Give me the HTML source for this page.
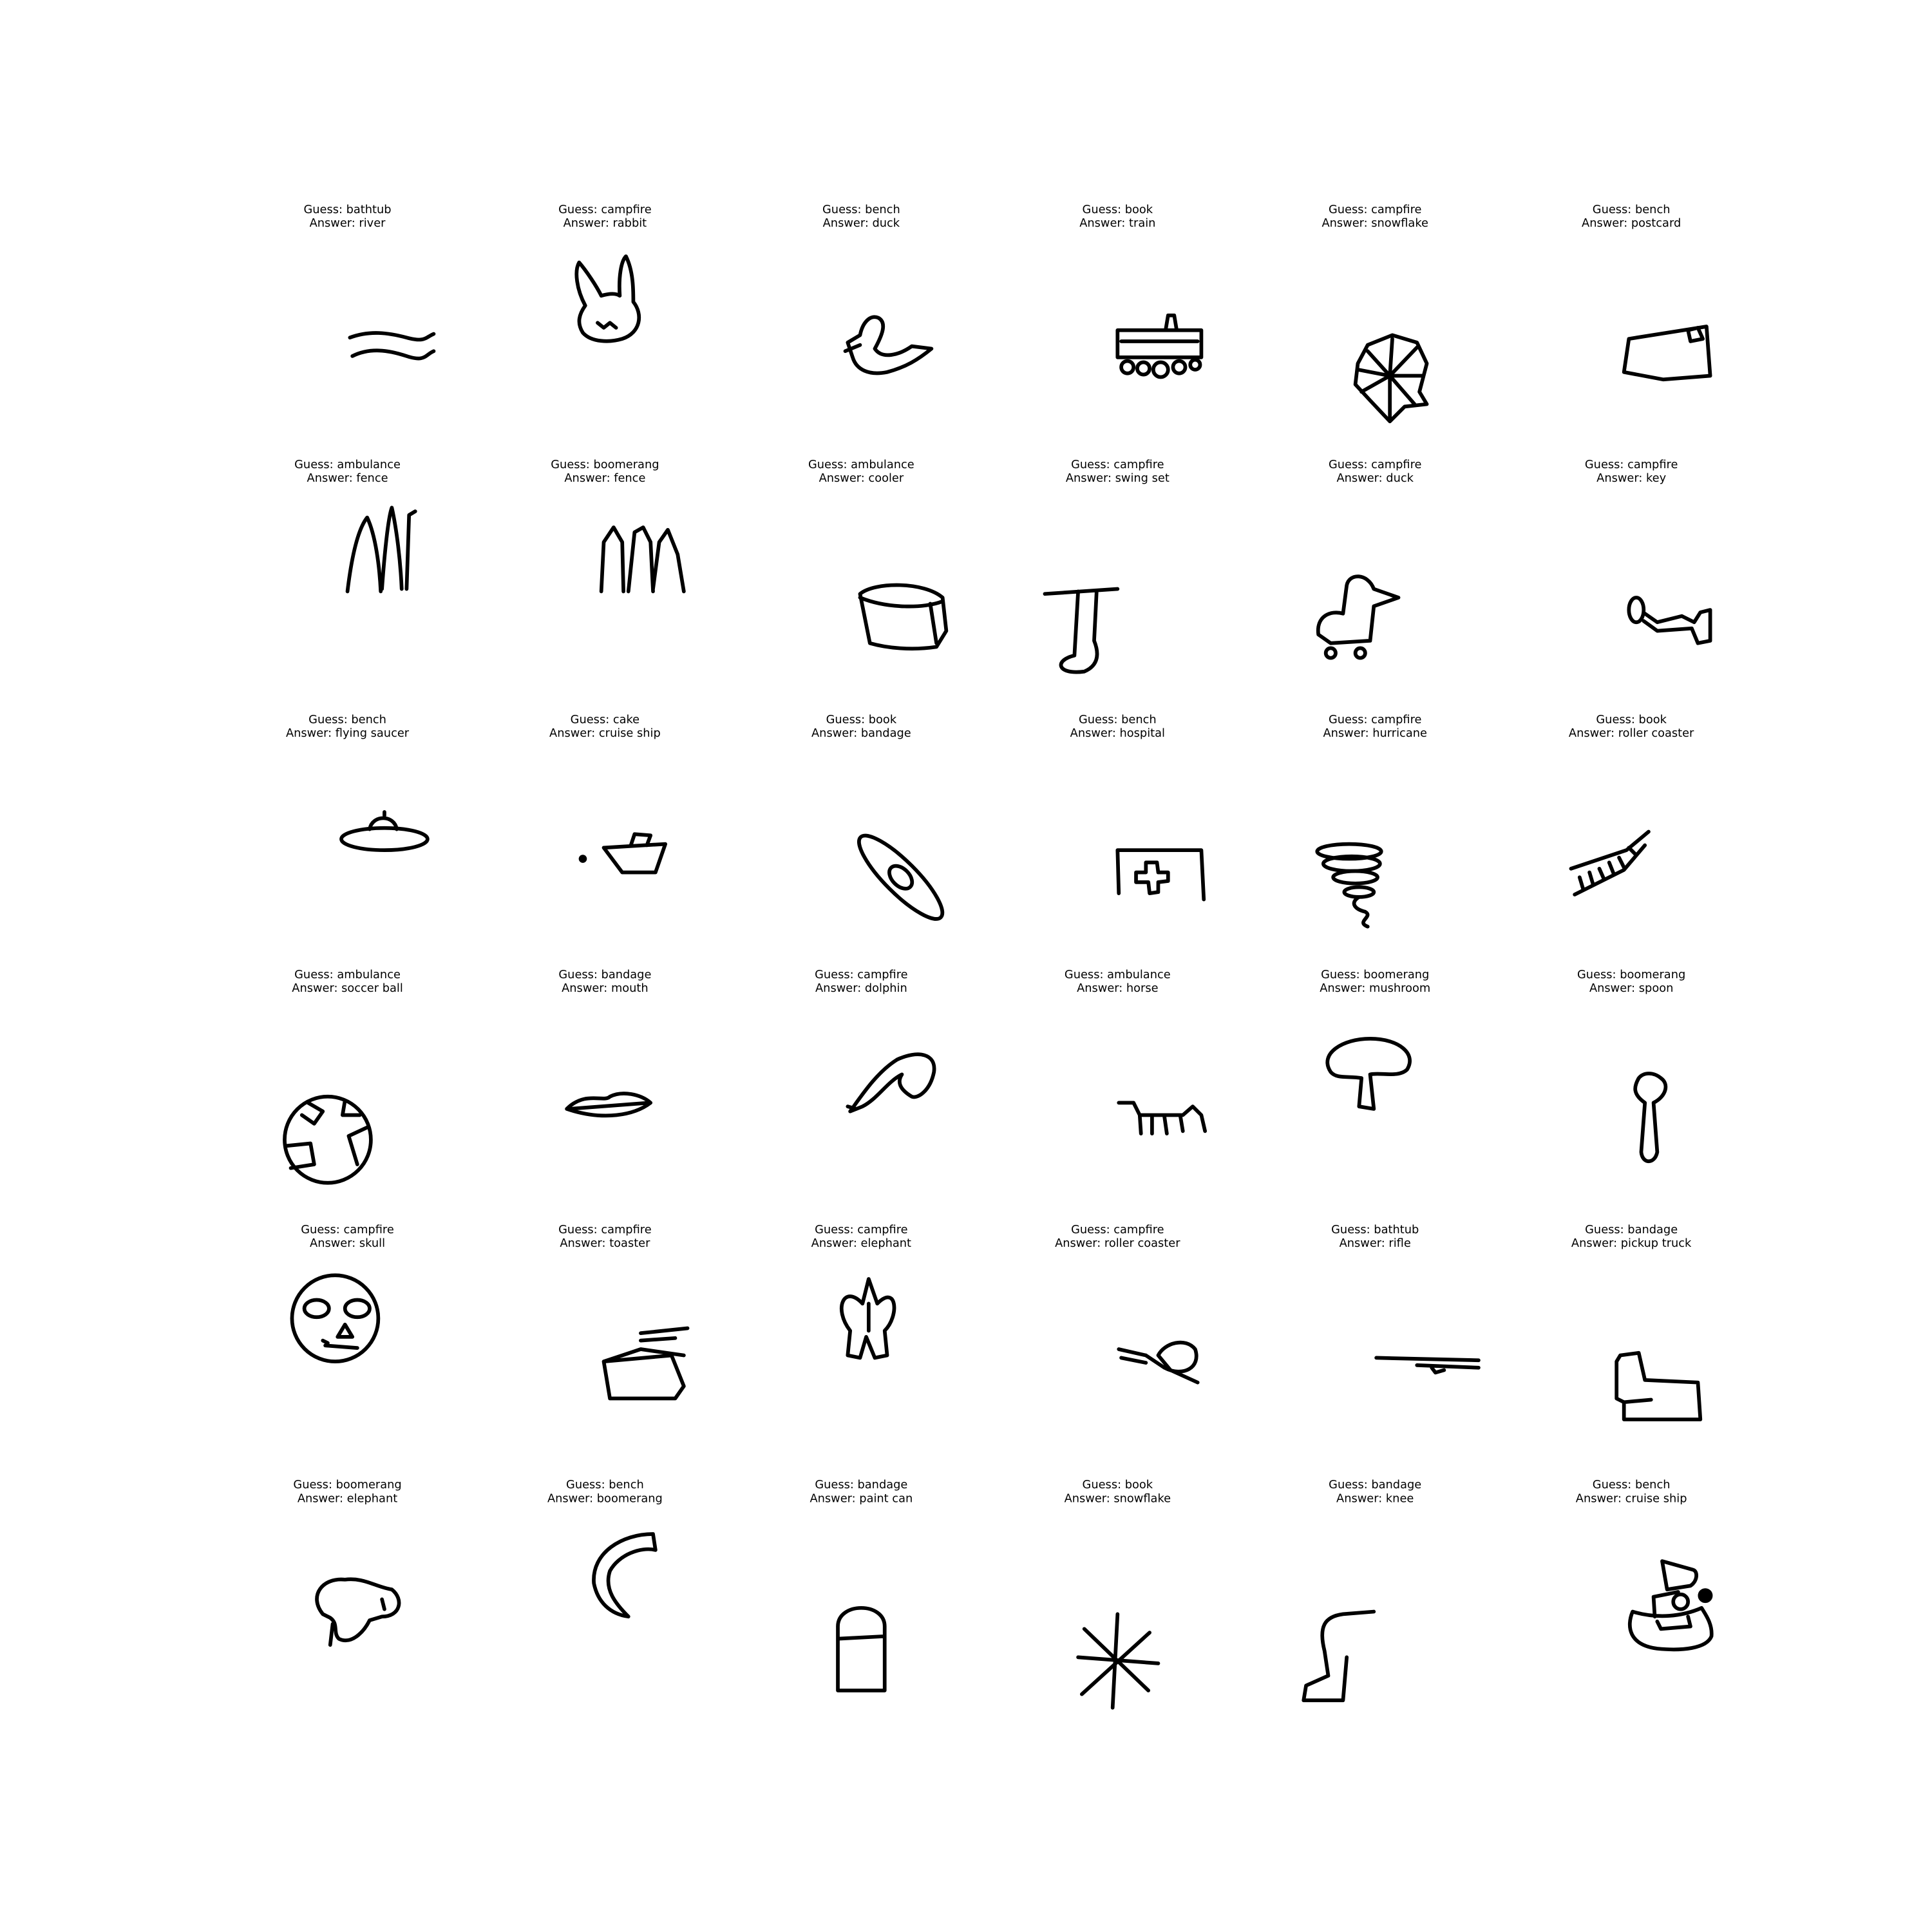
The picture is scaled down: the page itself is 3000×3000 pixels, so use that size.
<!DOCTYPE html>
<html><head><meta charset="utf-8"><style>
html,body{margin:0;padding:0;background:#fff;}
svg{display:block}
text{font-family:"DejaVu Sans","Liberation Sans",sans-serif;font-size:9.3px;fill:#000;text-anchor:middle}
.d{fill:none;stroke:#000;stroke-width:3;stroke-linecap:round;stroke-linejoin:round}
</style></head><body>
<svg width="3000" height="3000" viewBox="0 0 1568 1568" xmlns="http://www.w3.org/2000/svg">
<rect width="1568" height="1568" fill="#fff"/>
<g>
<text x="282" y="173">Guess: bathtub</text><text x="282" y="184">Answer: river</text>
<text x="491" y="173">Guess: campfire</text><text x="491" y="184">Answer: rabbit</text>
<text x="699" y="173">Guess: bench</text><text x="699" y="184">Answer: duck</text>
<text x="907" y="173">Guess: book</text><text x="907" y="184">Answer: train</text>
<text x="1116" y="173">Guess: campfire</text><text x="1116" y="184">Answer: snowflake</text>
<text x="1324" y="173">Guess: bench</text><text x="1324" y="184">Answer: postcard</text>

<text x="282" y="380">Guess: ambulance</text><text x="282" y="391">Answer: fence</text>
<text x="491" y="380">Guess: boomerang</text><text x="491" y="391">Answer: fence</text>
<text x="699" y="380">Guess: ambulance</text><text x="699" y="391">Answer: cooler</text>
<text x="907" y="380">Guess: campfire</text><text x="907" y="391">Answer: swing set</text>
<text x="1116" y="380">Guess: campfire</text><text x="1116" y="391">Answer: duck</text>
<text x="1324" y="380">Guess: campfire</text><text x="1324" y="391">Answer: key</text>

<text x="282" y="587">Guess: bench</text><text x="282" y="598">Answer: flying saucer</text>
<text x="491" y="587">Guess: cake</text><text x="491" y="598">Answer: cruise ship</text>
<text x="699" y="587">Guess: book</text><text x="699" y="598">Answer: bandage</text>
<text x="907" y="587">Guess: bench</text><text x="907" y="598">Answer: hospital</text>
<text x="1116" y="587">Guess: campfire</text><text x="1116" y="598">Answer: hurricane</text>
<text x="1324" y="587">Guess: book</text><text x="1324" y="598">Answer: roller coaster</text>

<text x="282" y="794">Guess: ambulance</text><text x="282" y="805">Answer: soccer ball</text>
<text x="491" y="794">Guess: bandage</text><text x="491" y="805">Answer: mouth</text>
<text x="699" y="794">Guess: campfire</text><text x="699" y="805">Answer: dolphin</text>
<text x="907" y="794">Guess: ambulance</text><text x="907" y="805">Answer: horse</text>
<text x="1116" y="794">Guess: boomerang</text><text x="1116" y="805">Answer: mushroom</text>
<text x="1324" y="794">Guess: boomerang</text><text x="1324" y="805">Answer: spoon</text>

<text x="282" y="1001">Guess: campfire</text><text x="282" y="1012">Answer: skull</text>
<text x="491" y="1001">Guess: campfire</text><text x="491" y="1012">Answer: toaster</text>
<text x="699" y="1001">Guess: campfire</text><text x="699" y="1012">Answer: elephant</text>
<text x="907" y="1001">Guess: campfire</text><text x="907" y="1012">Answer: roller coaster</text>
<text x="1116" y="1001">Guess: bathtub</text><text x="1116" y="1012">Answer: rifle</text>
<text x="1324" y="1001">Guess: bandage</text><text x="1324" y="1012">Answer: pickup truck</text>

<text x="282" y="1208">Guess: boomerang</text><text x="282" y="1219">Answer: elephant</text>
<text x="491" y="1208">Guess: bench</text><text x="491" y="1219">Answer: boomerang</text>
<text x="699" y="1208">Guess: bandage</text><text x="699" y="1219">Answer: paint can</text>
<text x="907" y="1208">Guess: book</text><text x="907" y="1219">Answer: snowflake</text>
<text x="1116" y="1208">Guess: bandage</text><text x="1116" y="1219">Answer: knee</text>
<text x="1324" y="1208">Guess: bench</text><text x="1324" y="1219">Answer: cruise ship</text>
</g>
<g class="d">
<path d="M284 274 C300 268 315 270 330 274 S345 274 352 271 M286 289 C300 282 315 284 330 289 S345 288 352 285"/>
<path d="M475 248 C468 235 466 220 470 213 C476 220 484 232 488 240 C495 238 500 238 503 240 C502 225 504 212 508 208 C514 220 514 235 514 245 C522 255 520 270 505 275 C495 278 480 278 473 270 C468 262 470 255 475 248 Z M485 262 L490 266 L495 262 L500 266"/>
<path d="M688 278 L698 272 C700 262 706 255 713 258 C720 262 716 272 710 283 C716 292 730 288 740 281 L756 283 C745 292 735 298 720 302 C705 305 695 300 692 290 L688 278 M686 285 L698 280"/>
<path d="M907 268 L975 268 L975 290 L907 290 Z M946 268 L948 256 L953 256 L955 268 M910 277 L972 277"/>
<circle class="d" cx="915" cy="298" r="5"/><circle class="d" cx="928" cy="299" r="5"/><circle class="d" cx="942" cy="300" r="6"/><circle class="d" cx="957" cy="298" r="5"/><circle class="d" cx="970" cy="296" r="4"/>
<path d="M1110 280 L1130 272 L1150 278 L1158 295 L1152 318 L1158 328 L1140 330 L1128 342 L1112 325 L1100 312 L1102 295 Z M1128 305 L1110 285 M1128 305 L1130 275 M1128 305 L1150 282 M1128 305 L1155 305 M1128 305 L1148 328 M1128 305 L1128 340 M1128 305 L1105 318 M1128 305 L1102 300"/>
<path d="M1318 302 L1322 275 L1385 265 L1388 305 L1350 308 Z M1370 268 L1378 266 L1382 275 L1372 277 Z"/>
<path d="M282 480 C285 455 290 430 298 420 C305 435 308 460 309 480 M310 478 C312 450 315 420 318 412 C322 430 325 455 326 478 M330 478 L332 418 L337 415"/>
<path d="M488 480 L490 440 L498 428 L505 440 L506 480 M510 480 L515 432 L522 428 L528 440 L530 480 M530 478 L535 440 L542 430 L550 450 L555 480"/>
<path d="M698 482 C710 472 750 472 765 485 L768 512 L760 525 C740 528 720 526 706 522 Z M698 485 C720 494 750 494 765 488 M755 490 L760 522"/>
<path d="M848 482 L907 478 M875 480 L872 532 C855 536 858 548 880 545 C892 540 892 530 888 520 L890 480"/>
<path d="M1070 515 C1068 500 1080 495 1090 498 L1093 475 C1095 465 1110 465 1115 478 L1135 485 L1115 492 L1112 520 L1080 522 Z"/>
<circle class="d" cx="1080" cy="530" r="4"/><circle class="d" cx="1104" cy="530" r="4"/>
<ellipse class="d" cx="1328" cy="495" rx="6" ry="10"/>
<path d="M1335 498 L1345 505 L1365 500 L1375 505 L1380 497 L1388 495 L1388 520 L1378 522 L1373 510 L1345 512 L1334 504"/>
<ellipse class="d" cx="312" cy="681" rx="35" ry="9"/>
<path d="M300 673 C302 661 320 661 322 673 M312 662 L312 659"/>
<path d="M490 688 L540 685 L532 708 L505 708 Z M512 686 L515 677 L528 678 L525 686"/>
<circle cx="473" cy="697" r="1.8" fill="#000"/>
<g transform="rotate(45 731 712)"><ellipse class="d" cx="731" cy="712" rx="46" ry="13"/><ellipse class="d" cx="731" cy="712" rx="11" ry="7"/></g>
<path d="M908 725 L907 690 L975 690 L977 730 M930 700 L930 708 L922 708 L922 716 L932 716 L933 725 L940 724 L940 716 L948 715 L948 708 L940 708 L939 700 Z"/>
<ellipse class="d" cx="1095" cy="691" rx="26" ry="6"/><ellipse class="d" cx="1097" cy="701" rx="23" ry="6"/><ellipse class="d" cx="1100" cy="712" rx="18" ry="5"/><ellipse class="d" cx="1103" cy="724" rx="12" ry="4"/>
<path d="M1103 728 C1095 733 1100 738 1108 740 C1115 744 1100 748 1110 752"/>
<path d="M1275 705 L1320 690 L1338 675 M1278 726 L1318 706 L1335 686 M1282 712 L1285 722 M1290 708 L1293 718 M1298 705 L1302 714 M1306 700 L1310 710 M1314 696 L1318 704 M1322 688 L1328 694"/>
<circle class="d" cx="266" cy="925" r="35"/>
<path d="M250 895 L262 902 L255 912 L245 905 M280 893 L278 905 L292 905 M298 915 L283 922 L290 945 M232 930 L252 928 L255 945 L236 948"/>
<path d="M460 900 C475 885 490 895 495 890 C505 885 520 888 528 895 C515 905 490 910 460 900 Z M462 900 L527 895"/>
<path d="M690 902 C700 888 712 870 728 860 C745 852 760 855 758 870 C755 885 745 892 740 890 C730 884 728 878 732 872 C720 878 712 892 700 898 Z M688 898 L695 900"/>
<path d="M908 895 L920 895 L925 905 L960 905 L968 898 L975 905 L978 918 M925 905 L926 920 M935 906 L935 920 M945 906 L947 920 M958 906 L960 918"/>
<path d="M1080 870 C1070 855 1090 843 1112 843 C1135 843 1150 855 1142 868 C1135 875 1120 870 1112 872 L1115 900 L1103 898 L1105 875 C1095 873 1085 876 1080 870 Z"/>
<path d="M1330 875 C1326 882 1325 888 1335 895 L1332 935 C1333 945 1343 945 1345 935 L1342 895 C1352 890 1355 880 1348 875 C1342 870 1334 870 1330 875 Z"/>
<circle class="d" cx="272" cy="1070" r="35"/>
<ellipse class="d" cx="257" cy="1062" rx="10" ry="7"/><ellipse class="d" cx="290" cy="1062" rx="10" ry="7"/>
<path d="M280 1075 L274 1085 L286 1085 Z M264 1092 L290 1094 M262 1088 L266 1090"/>
<path d="M490 1105 L545 1100 L555 1125 L548 1135 L495 1135 Z M490 1105 L505 1100 L520 1095 L555 1100 M520 1082 L558 1078 M520 1088 L548 1086"/>
<path d="M705 1038 L700 1058 C685 1042 676 1062 690 1080 L688 1100 L698 1102 L703 1085 L710 1102 L720 1100 L718 1080 C730 1068 728 1042 712 1058 Z M705 1058 L705 1080"/>
<path d="M908 1095 L930 1100 L945 1110 C960 1118 975 1110 970 1095 C962 1085 945 1090 940 1100 L950 1112 L972 1122 M910 1102 L930 1106"/>
<path d="M1117 1102 L1200 1104 M1150 1108 L1200 1110 M1162 1110 L1165 1114 L1172 1112"/>
<path d="M1312 1105 L1315 1100 L1330 1098 L1335 1120 L1378 1122 L1380 1152 L1318 1152 L1318 1138 L1312 1135 Z M1318 1138 L1340 1136"/>
<path d="M262 1310 C250 1295 262 1280 280 1282 C295 1280 305 1288 318 1290 C328 1298 325 1312 310 1312 L300 1315 C295 1325 285 1335 275 1330 C270 1325 275 1318 268 1313 Z M270 1318 L268 1335 M310 1298 L312 1306"/>
<path d="M530 1245 C505 1245 480 1260 482 1285 C485 1300 495 1310 510 1312 C500 1302 490 1290 495 1275 C502 1262 520 1255 532 1258 Z"/>
<path d="M680 1372 L680 1320 C680 1300 718 1300 718 1320 L718 1372 Z M680 1330 L718 1328"/>
<path d="M875 1345 L940 1350 M907 1310 L903 1386 M880 1322 L932 1372 M933 1325 L878 1375"/>
<path d="M1115 1308 L1090 1310 C1075 1312 1070 1320 1075 1340 L1078 1360 L1060 1368 L1058 1380 L1090 1380 L1093 1345"/>
<path d="M1325 1308 C1320 1320 1322 1335 1345 1338 C1365 1340 1385 1338 1389 1328 C1390 1318 1384 1310 1381 1305 C1365 1312 1345 1314 1325 1308 Z M1343 1312 L1342 1296 L1362 1292 M1345 1316 L1348 1322 L1372 1320 L1370 1312"/>
<path d="M1349 1267 L1353 1290 L1372 1287 C1378 1283 1378 1275 1374 1274 Z"/>
<circle class="d" cx="1364" cy="1300" r="6"/>
<circle cx="1384" cy="1295" r="4.5" fill="#000"/>
</g>
</svg>
</body></html>
